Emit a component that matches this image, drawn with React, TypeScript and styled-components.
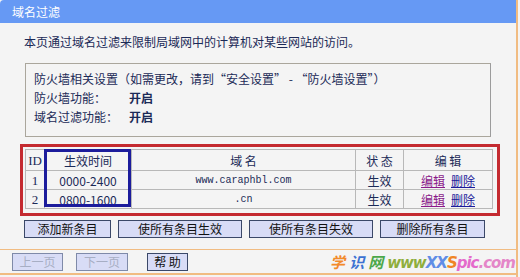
import styled, { createGlobalStyle } from "styled-components";

const GlobalStyle = createGlobalStyle`
  html, body {
    margin: 0;
    padding: 0;
    background: #f4f4f4;
  }
  body {
    font-family: "Noto Sans CJK SC", "DejaVu Sans", sans-serif;
    font-size: 12px;
    color: #1b2a57;
  }
`;

const Page = styled.div`
  width: 516px;
  height: 277px;
  border-right: 2px solid #f1bc82;
  display: flex;
  flex-direction: column;
  background: #f4f4f4;
  overflow: hidden;
`;

const Header = styled.div`
  height: 23px;
  background: #6699f4;
  color: #fff;
  font-size: 12px;
  line-height: 23px;
  padding-left: 12px;
  border-top-left-radius: 4px;
`;

const Content = styled.div`
  display: flex;
  flex-direction: column;
  padding-left: 24px;
`;

const Desc = styled.div`
  margin-top: 11px;
  line-height: 16px;
`;

const InfoBox = styled.div`
  margin-top: 13px;
  margin-left: 1px;
  width: 466px;
  height: 74px;
  border: 1px solid #aaa69c;
  border-right-color: #9c9c9c;
  padding: 5px 0 0 8px;
  box-sizing: border-box;
`;

const InfoLine = styled.div`
  display: flex;
  line-height: 19px;
`;

const InfoLabel = styled.span`
  width: 95px;
`;

const InfoValue = styled.span`
  font-weight: bold;
`;

const RedFrame = styled.div`
  position: relative;
  margin-top: 7px;
  margin-left: -4px;
  width: 480px;
  border: 3px solid #c42a30;
  padding: 2px 5px 4px 2px;
  box-sizing: border-box;
`;

const Table = styled.table`
  width: 468px;
  border-collapse: collapse;
  border: 1px solid #b4b4b4;
`;

const Th = styled.th<{ $w?: number }>`
  width: ${(p) => (p.$w ? `${p.$w}px` : "auto")};
  height: 20px;
  padding: 0;
  font-weight: normal;
  font-size: 12px;
  border: 1px solid #b8b8b8;
  text-align: center;
`;

const Td = styled.td<{ $mono?: boolean }>`
  height: 18px;
  padding: 0;
  border: 1px solid #b8b8b8;
  text-align: center;
  font-size: ${(p) => (p.$mono ? "10px" : "12px")};
  font-family: ${(p) =>
    p.$mono ? `"Liberation Mono", monospace` : `inherit`};
`;

const IdText = styled.span`
  font-family: "Liberation Serif", serif;
  font-size: 13px;
`;

const Link = styled.a<{ $visited?: boolean }>`
  color: ${(p) => (p.$visited ? "#8a1a8a" : "#1a1a9a")};
  text-decoration: underline;
  margin: 0 3px;
`;

const BlueMark = styled.div`
  position: absolute;
  left: 21px;
  top: 2px;
  width: 87px;
  height: 58px;
  border: 3px solid #1c1c9c;
  box-sizing: border-box;
  pointer-events: none;
`;

const ButtonRow = styled.div`
  display: flex;
  gap: 7px;
  margin-top: 4px;
`;

const Button = styled.button<{ $w: number; $disabled?: boolean }>`
  width: ${(p) => p.$w}px;
  height: 18px;
  padding: 0;
  background: #d8dcf6;
  border: 1px solid ${(p) => (p.$disabled ? "#7f8aa8" : "#3b4868")};
  color: ${(p) => (p.$disabled ? "#a7aec4" : "#111")};
  font-family: "Noto Sans CJK SC", sans-serif;
  font-size: 12px;
  line-height: 16px;
`;

const Divider = styled.div`
  margin-top: 11px;
  height: 1px;
  background: #f1bc82;
`;

const NavRow = styled.div`
  display: flex;
  align-items: center;
  padding-left: 12px;
  height: 23px;
  border-bottom: 2px solid #f1bc82;
`;

const NavButtons = styled.div`
  display: flex;
  gap: 13px;
`;

const HelpButton = styled(Button)`
  margin-left: 6px;
`;

const Watermark = styled.div`
  margin-left: auto;
  margin-right: 1px;
  font-family: "DejaVu Sans", "Noto Sans CJK SC", sans-serif;
  font-weight: bold;
  font-style: italic;
  font-size: 15px;
  letter-spacing: -1px;
  white-space: nowrap;
`;

const W = styled.span<{ $c: string; $gap?: number }>`
  color: ${(p) => p.$c};
  margin-right: ${(p) => p.$gap ?? 0}px;
`;

const rows = [
  { id: 1, time: "0000-2400", domain: "www.caraphbl.com" },
  { id: 2, time: "0800-1600", domain: ".cn" },
];

export default function App() {
  return (
    <>
      <GlobalStyle />
      <Page>
        <Header>域名过滤</Header>
        <Content>
          <Desc>本页通过域名过滤来限制局域网中的计算机对某些网站的访问。</Desc>
          <InfoBox>
            <InfoLine>防火墙相关设置（如需更改，请到“安全设置” - “防火墙设置”）</InfoLine>
            <InfoLine>
              <InfoLabel>防火墙功能：</InfoLabel>
              <InfoValue>开启</InfoValue>
            </InfoLine>
            <InfoLine>
              <InfoLabel>域名过滤功能：</InfoLabel>
              <InfoValue>开启</InfoValue>
            </InfoLine>
          </InfoBox>
          <RedFrame>
            <Table>
              <thead>
                <tr>
                  <Th $w={18}>
                    <IdText>ID</IdText>
                  </Th>
                  <Th $w={86}>生效时间</Th>
                  <Th>域 名</Th>
                  <Th $w={47}>状 态</Th>
                  <Th $w={88}>编 辑</Th>
                </tr>
              </thead>
              <tbody>
                {rows.map((r) => (
                  <tr key={r.id}>
                    <Td>
                      <IdText>{r.id}</IdText>
                    </Td>
                    <Td>{r.time}</Td>
                    <Td $mono>{r.domain}</Td>
                    <Td>生效</Td>
                    <Td>
                      <Link $visited>编辑</Link>
                      <Link>删除</Link>
                    </Td>
                  </tr>
                ))}
              </tbody>
            </Table>
            <BlueMark />
          </RedFrame>
          <ButtonRow>
            <Button $w={87}>添加新条目</Button>
            <Button $w={124}>使所有条目生效</Button>
            <Button $w={124}>使所有条目失效</Button>
            <Button $w={105}>删除所有条目</Button>
          </ButtonRow>
        </Content>
        <Divider />
        <NavRow>
          <NavButtons>
            <Button $w={51} $disabled>上一页</Button>
            <Button $w={52} $disabled>下一页</Button>
            <HelpButton $w={41}>帮 助</HelpButton>
          </NavButtons>
          <Watermark>
            <W $c="#f28a2a" $gap={5}>学</W>
            <W $c="#3c72d2" $gap={5}>识</W>
            <W $c="#4ca84a" $gap={5}>网</W>
            <W $c="#8fae3c">www</W>
            <W $c="#5f8de6">XX</W>
            <W $c="#f08424">S</W>
            <W $c="#e46acb">pic</W>
            <W $c="#e486c8">.com</W>
          </Watermark>
        </NavRow>
      </Page>
    </>
  );
}
